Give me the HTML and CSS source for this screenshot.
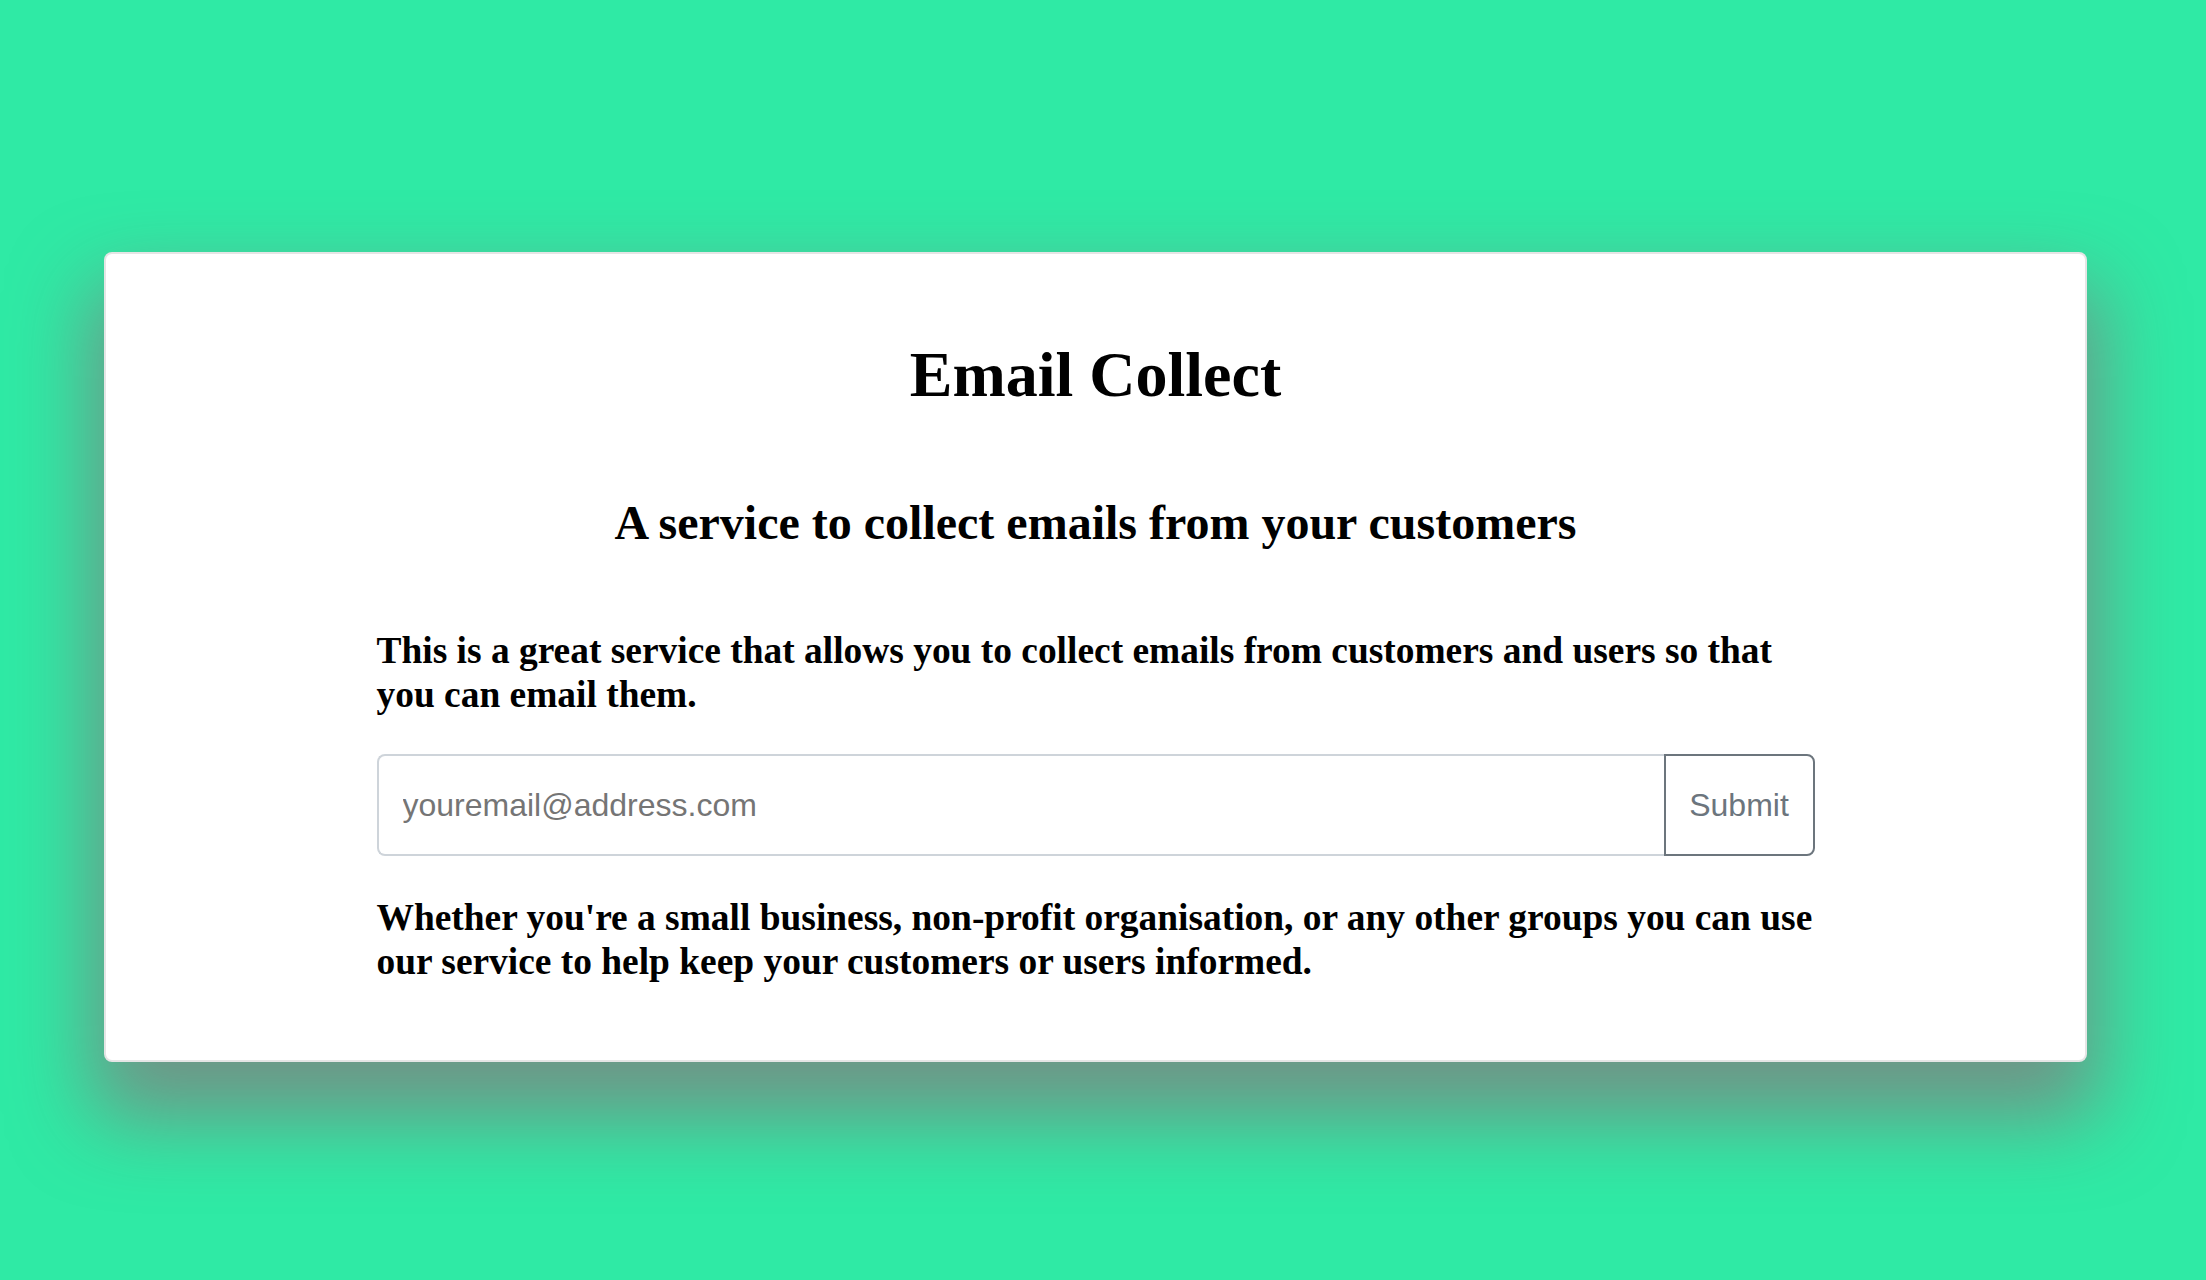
FILE: index.html
```html
<!DOCTYPE html>
<html lang="en">
<head>
<meta charset="utf-8">
<title>Email Collect</title>
<link rel="stylesheet" href="styles.css">
</head>
<body class="page">
  <main class="card">
    <h1 class="title">Email Collect</h1>
    <h2 class="subtitle">A service to collect emails from your customers</h2>
    <div class="content">
      <h3 class="lead">This is a great service that allows you to collect emails from customers and users so that you can email them.</h3>
      <form class="signup" onsubmit="return false;">
        <input class="signup-input" type="email" placeholder="youremail@address.com">
        <button class="signup-button" type="submit">Submit</button>
      </form>
      <h3 class="lead lead-bottom">Whether you're a small business, non-profit organisation, or any other groups you can use our service to help keep your customers or users informed.</h3>
    </div>
  </main>
</body>
</html>
```

FILE: styles.css
```css
html, body {
  margin: 0;
  padding: 0;
}

.page {
  min-height: 1280px;
  box-sizing: border-box;
  background: #2feaa5;
  padding: 252px 0 0 104px;
  font-family: "Liberation Serif", "Times New Roman", serif;
  color: #000;
  overflow: hidden;
}

.card {
  box-sizing: border-box;
  width: 1983px;
  background: #fff;
  border: 2px solid rgba(0, 0, 0, 0.1);
  border-radius: 8px;
  padding: 83px 0 76px;
  box-shadow: 0 45px 80px 12px rgba(128, 128, 128, 0.8);
  display: flex;
  flex-direction: column;
}

.title {
  margin: 0;
  font-size: 64px;
  line-height: 1.2;
  font-weight: 700;
  text-align: center;
}

.subtitle {
  margin: 80px 0 0;
  font-size: 48px;
  line-height: 1.2;
  font-weight: 700;
  text-align: center;
}

.content {
  width: 1438px;
  margin: 78px auto 0;
  display: flex;
  flex-direction: column;
}

.lead {
  margin: 0;
  font-size: 37.44px;
  line-height: 44px;
  font-weight: 700;
}

.signup {
  display: flex;
  margin: 37px 0 0;
  height: 102px;
}

.signup-input {
  flex: 1;
  min-width: 0;
  box-sizing: border-box;
  height: 102px;
  margin: 0;
  padding: 0 24px;
  border: 2px solid #ced4da;
  border-right: 0;
  border-radius: 8px 0 0 8px;
  font-family: "Liberation Sans", Arial, sans-serif;
  font-size: 32px;
  color: #495057;
  background: #fff;
  outline: none;
}

.signup-input::placeholder {
  color: #757575;
  opacity: 1;
}

.signup-button {
  box-sizing: border-box;
  width: 151px;
  height: 102px;
  margin: 0;
  padding: 0;
  border: 2px solid #6c757d;
  border-radius: 0 8px 8px 0;
  background: #fff;
  font-family: "Liberation Sans", Arial, sans-serif;
  font-size: 32px;
  color: #6c757d;
  cursor: pointer;
}

.lead-bottom {
  margin-top: 40px;
}
```
